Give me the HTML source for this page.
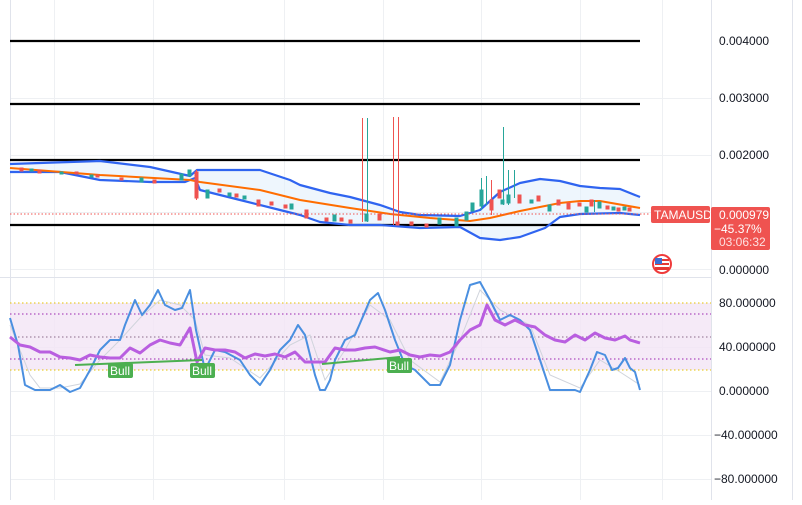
<!DOCTYPE html><html><head><style>body{margin:0;width:802px;height:500px;overflow:hidden;background:#fff;font-family:"Liberation Sans",sans-serif}</style></head><body>
<svg width="802" height="500" xmlns="http://www.w3.org/2000/svg" font-family="Liberation Sans, sans-serif">
<g stroke="#eef0f3" stroke-width="1" shape-rendering="crispEdges">
<line x1="54.5" y1="0" x2="54.5" y2="500"/><line x1="153.5" y1="0" x2="153.5" y2="500"/><line x1="284.5" y1="0" x2="284.5" y2="500"/><line x1="383.5" y1="0" x2="383.5" y2="500"/><line x1="481.5" y1="0" x2="481.5" y2="500"/><line x1="580.5" y1="0" x2="580.5" y2="500"/><line x1="662.5" y1="0" x2="662.5" y2="500"/>
<line x1="10" y1="98.5" x2="711" y2="98.5"/><line x1="10" y1="155.5" x2="711" y2="155.5"/><line x1="10" y1="212.5" x2="711" y2="212.5"/><line x1="10" y1="269.5" x2="711" y2="269.5"/>
<line x1="10" y1="347.5" x2="711" y2="347.5"/><line x1="10" y1="391.5" x2="711" y2="391.5"/><line x1="10" y1="435.5" x2="711" y2="435.5"/><line x1="10" y1="479.5" x2="711" y2="479.5"/>
</g>
<g shape-rendering="crispEdges">
<line x1="10.5" y1="0" x2="10.5" y2="500" stroke="#e0e3eb"/>
<line x1="711.5" y1="0" x2="711.5" y2="500" stroke="#e0e3eb"/>
<line x1="792.5" y1="0" x2="792.5" y2="500" stroke="#e0e3eb"/>
<line x1="0" y1="277.5" x2="711" y2="277.5" stroke="#e0e3eb"/>
</g>
<path d="M10,164 L100,161 150,167 190,176 197,170 260,170 290,180 300,185 330,193 350,197 380,205 400,212 420,215 460,216 480,210 500,192 520,183 540,179 560,181 580,186 600,188 620,189 640,197 L640,215 620,213 580,214 560,217 545,228 520,237 500,240 480,238 460,227 420,228 380,225 350,225 320,222 300,215 280,210 240,200 200,190 195,178 185,182 150,182 100,180 60,172 10,172Z" fill="#e3f0fb" opacity=".6"/>
<g stroke="#000" stroke-width="2.2"><line x1="10" y1="41" x2="640" y2="41"/><line x1="10" y1="104" x2="640" y2="104"/><line x1="10" y1="160" x2="640" y2="160"/><line x1="10" y1="225" x2="640" y2="225"/></g>
<g fill="none" stroke="#2f64f0" stroke-width="2.2" stroke-linejoin="round">
<polyline points="10,164 100,161 150,167 190,176 197,170 260,170 290,180 300,185 330,193 350,197 380,205 400,212 420,215 460,216 480,210 500,192 520,183 540,179 560,181 580,186 600,188 620,189 640,197"/>
<polyline points="10,172 60,172 100,180 150,182 185,182 195,178 200,190 240,200 280,210 300,215 320,222 350,225 380,225 420,228 460,227 480,238 500,240 520,237 545,228 560,217 580,214 620,213 640,215"/>
</g>
<polyline fill="none" stroke="#ff6d00" stroke-width="2" points="10,168 100,175 190,180 200,182 260,190 300,200 350,208 390,214 430,218 470,221 490,218 520,211 560,203 580,201 600,201 640,208"/>
<line x1="10" y1="214" x2="650" y2="214" stroke="#ef5350" stroke-dasharray="1.5,2"/>
<g stroke-width="1" shape-rendering="crispEdges">
<g fill="#ef5350" stroke="#ef5350">
<rect x="20" y="168" width="3" height="3"/><rect x="38" y="170" width="3" height="3"/><rect x="75" y="172" width="3" height="2"/><rect x="96" y="175" width="3" height="2"/><rect x="120" y="178" width="3" height="2"/><rect x="153" y="180" width="3" height="3"/><rect x="195" y="172" width="3" height="26"/><line x1="196.5" y1="170" x2="196.5" y2="200"/><rect x="218" y="189" width="3" height="3"/><rect x="235" y="194" width="3" height="3"/><rect x="257" y="200" width="3" height="6"/><rect x="270" y="202" width="3" height="3"/><rect x="284" y="205" width="3" height="3"/><rect x="305" y="210" width="3" height="8"/><rect x="325" y="218" width="3" height="3"/><rect x="340" y="218" width="3" height="3"/><rect x="349" y="220" width="3" height="3"/><rect x="378" y="214" width="3" height="6"/><line x1="362.5" y1="118" x2="362.5" y2="222"/><line x1="393.5" y1="117" x2="393.5" y2="225"/><line x1="398.5" y1="117" x2="398.5" y2="225"/><rect x="396" y="222" width="3" height="3"/><rect x="410" y="222" width="3" height="3"/><rect x="425" y="224" width="3" height="3"/>
<rect x="490" y="200" width="3" height="10"/><line x1="491.5" y1="180" x2="491.5" y2="215"/><rect x="498" y="190" width="3" height="8"/><rect x="518" y="195" width="3" height="8"/><rect x="537" y="196" width="3" height="5"/><rect x="557" y="200" width="3" height="5"/><rect x="567" y="203" width="3" height="6"/><rect x="578" y="203" width="3" height="3"/><rect x="590" y="200" width="3" height="6"/><rect x="606" y="206" width="3" height="3"/><rect x="617" y="208" width="3" height="3"/><rect x="628" y="208" width="3" height="3"/>
</g>
<g fill="#26a69a" stroke="#26a69a">
<rect x="30" y="169" width="3" height="2"/><rect x="60" y="172" width="3" height="2"/><rect x="90" y="175" width="3" height="2"/><rect x="140" y="178" width="3" height="4"/><rect x="180" y="174" width="3" height="6"/><rect x="188" y="170" width="3" height="6"/><rect x="206" y="190" width="3" height="8"/><rect x="228" y="193" width="3" height="3"/><rect x="243" y="196" width="3" height="3"/><rect x="290" y="204" width="3" height="5"/><rect x="333" y="215" width="3" height="6"/><line x1="367.5" y1="118" x2="367.5" y2="222"/><rect x="365" y="214" width="3" height="7"/><rect x="438" y="218" width="3" height="6"/><rect x="455" y="218" width="3" height="8"/><rect x="465" y="212" width="3" height="8"/><rect x="471" y="203" width="3" height="8"/><rect x="480" y="190" width="3" height="16"/><line x1="481.5" y1="178" x2="481.5" y2="210"/><line x1="486.5" y1="176" x2="486.5" y2="205"/><line x1="503.5" y1="127" x2="503.5" y2="205"/><rect x="501" y="200" width="3" height="4"/><rect x="507" y="195" width="3" height="8"/><line x1="508.5" y1="170" x2="508.5" y2="205"/><line x1="514.5" y1="170" x2="514.5" y2="198"/><rect x="530" y="200" width="3" height="3"/><rect x="548" y="205" width="3" height="6"/><rect x="585" y="207" width="3" height="5"/><line x1="594.5" y1="200" x2="594.5" y2="212"/><rect x="598" y="202" width="3" height="6"/><rect x="612" y="207" width="3" height="3"/><rect x="623" y="207" width="3" height="3"/>
</g></g>
<rect x="10" y="303" width="701" height="67" fill="#f3e5f5" opacity=".8"/>
<g stroke-dasharray="1.5,2.5" stroke-width="1">
<line x1="10" y1="303" x2="711" y2="303" stroke="#e6c200"/><line x1="10" y1="370" x2="711" y2="370" stroke="#e6c200"/>
<line x1="10" y1="314" x2="711" y2="314" stroke="#9c27b0"/><line x1="10" y1="359" x2="711" y2="359" stroke="#9c27b0"/>
<line x1="10" y1="337" x2="711" y2="337" stroke="#8a6a8a"/>
</g>
<polyline fill="none" stroke="#d0d4dc" stroke-width="1" points="10,325 20,350 30,375 40,388 60,388 80,384 100,360 120,340 140,318 160,300 180,305 195,320 205,355 230,358 260,378 290,345 310,335 325,380 345,350 370,305 390,320 410,360 440,382 460,340 480,290 500,310 530,325 550,375 580,388 600,360 620,372 640,385"/>
<polyline fill="none" stroke="#4a8fe0" stroke-width="2" stroke-linejoin="round" points="10,318 18,345 25,385 35,390 50,390 60,385 70,392 80,388 90,370 100,350 110,340 120,340 125,325 135,300 142,315 150,305 158,290 165,305 175,310 182,308 190,290 196,330 205,370 215,350 225,352 240,360 250,375 260,385 270,370 280,350 290,340 298,325 305,335 315,375 320,390 325,390 330,380 335,360 345,340 355,335 370,300 378,293 385,310 395,340 405,365 415,370 430,385 440,385 450,365 460,320 470,285 480,282 490,300 500,320 510,315 520,320 530,330 540,360 550,390 560,390 575,390 580,392 590,370 597,352 605,355 612,370 618,368 625,358 630,368 635,372 640,390"/>
<polyline fill="none" stroke="#b95ee0" stroke-width="3" stroke-linejoin="round" points="10,337 20,345 30,347 40,352 50,352 60,357 70,358 80,360 90,355 100,357 110,358 120,358 130,348 140,353 150,345 160,340 170,343 180,345 190,328 197,362 205,348 215,350 225,350 235,352 245,358 255,354 265,356 275,354 285,357 295,352 305,362 315,362 325,362 335,348 345,350 355,350 365,348 375,347 390,352 400,350 410,355 420,357 430,355 440,356 450,352 460,340 470,330 480,325 487,305 495,320 505,325 515,320 525,325 535,327 545,335 555,340 565,342 575,335 585,340 595,333 605,338 615,340 625,336 630,340 640,343"/>
<g stroke="#4caf50" stroke-width="2"><line x1="75" y1="365" x2="202" y2="360"/><line x1="322" y1="364" x2="400" y2="357"/></g>
<g fill="#4caf50"><rect x="108" y="363" width="25" height="15" rx="2"/><rect x="190" y="363" width="25" height="15" rx="2"/><rect x="387" y="358" width="25" height="15" rx="2"/></g>
<g fill="#fff" font-size="12" text-anchor="middle"><text x="120" y="375">Bull</text><text x="202" y="375">Bull</text><text x="399" y="370">Bull</text></g>
<g fill="#131722" font-size="12">
<text x="719" y="45">0.004000</text><text x="719" y="102">0.003000</text><text x="719" y="159">0.002000</text><text x="719" y="274">0.000000</text>
<text x="719" y="307">80.000000</text><text x="719" y="351">40.000000</text><text x="719" y="395">0.000000</text><text x="714" y="439">−40.000000</text><text x="714" y="483">−80.000000</text>
</g>
<rect x="651" y="206" width="59" height="17" rx="2" fill="#ef5350"/>
<text x="654" y="219" fill="#fff" font-size="12">TAMAUSD</text>
<rect x="711" y="207" width="59" height="43" rx="2" fill="#ef5350"/>
<g fill="#fff" font-size="12"><text x="719" y="219">0.000979</text><text x="714" y="233">−45.37%</text><text x="719" y="246" fill="#fde0e0">03:06:32</text></g>
<circle cx="662" cy="264" r="9" fill="#fff" stroke="#ef3b3b" stroke-width="2"/>
<rect x="655" y="259" width="14" height="11" fill="#e53935"/><rect x="655" y="261" width="14" height="2" fill="#fff"/><rect x="655" y="265" width="14" height="2" fill="#fff"/><rect x="655" y="258" width="7" height="6" fill="#3b6fd4"/>
</svg></body></html>
